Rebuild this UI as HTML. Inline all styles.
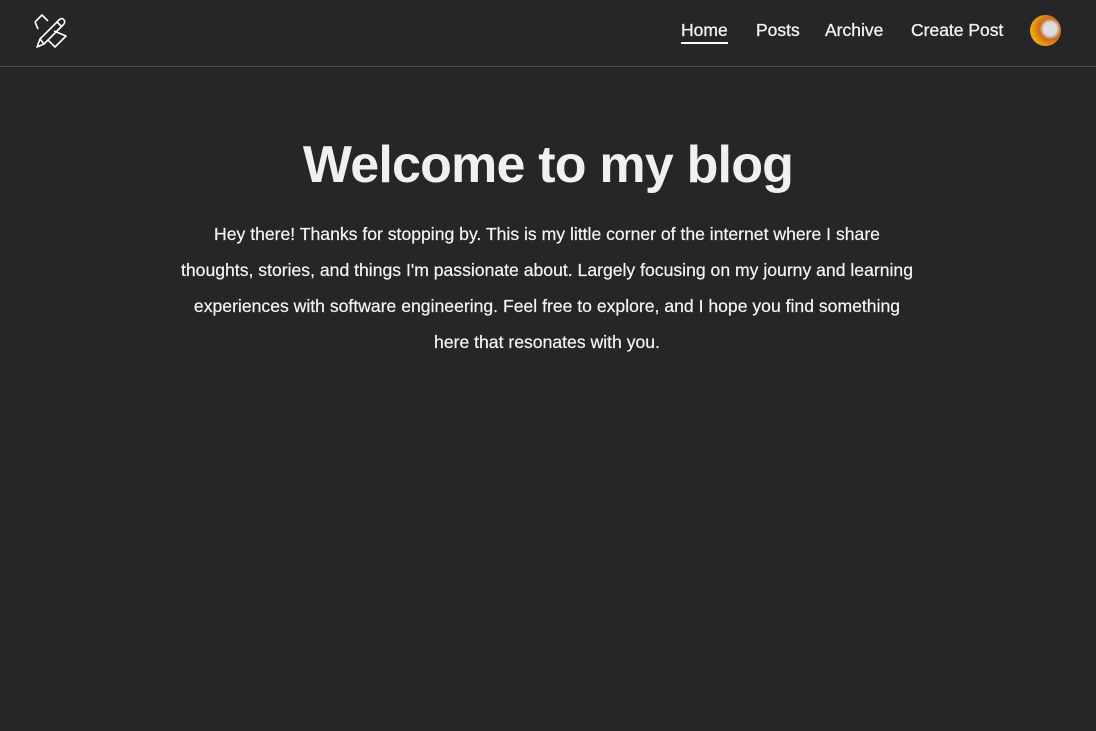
<!DOCTYPE html>
<html><head><style>
html,body{margin:0;padding:0;background:#262628;width:1096px;height:731px;overflow:hidden;font-family:"Liberation Sans",sans-serif;color:#f2f2f2}
header{height:66px;border-bottom:1px solid #4a4a4c;position:relative}
.logo{position:absolute;left:32px;top:12px}
nav{position:absolute;top:20px;left:0;width:1096px;height:24px;font-size:17.5px}
nav a{position:absolute;color:#f2f2f2;text-decoration:none;white-space:nowrap;top:0;-webkit-text-stroke:0.3px #f2f2f2}
.home{border-bottom:2px solid #fff;padding-bottom:1px}
.av{position:absolute;left:1030px;top:15px;width:31px;height:31px;border-radius:50%;background:radial-gradient(circle at 65% 45%,#ddd 0 25%,#c96a2a 40%,#f0a800 70%)}
h1{margin:0;position:absolute;top:135px;width:1096px;text-align:center;font-size:52px;font-weight:bold;letter-spacing:-0.8px;color:#f0f0f0}
p{position:absolute;top:216px;left:0;width:1094px;margin:0;text-align:center;font-size:17.6px;line-height:36px;color:#f4f4f4;white-space:nowrap;-webkit-text-stroke:0.2px #f4f4f4}
</style></head><body>
<header>
<svg class="logo" width="38" height="38" viewBox="0 0 38 38" fill="none" stroke="#fff" stroke-width="1.6" stroke-linejoin="round">
<path d="M3 10 L10 3 L16 9"/><path d="M3 10 L6 17"/><path d="M22 19 L34 24 L23 35 L16 28"/>
<path d="M5 35 L8 27 L27 8 Q30 5 32 8 Q34 10 31 13 L12 32 Z"/><path d="M8 27 L12 32"/><path d="M25 10 L29 14"/>
</svg>
<nav>
<a class="home" style="left:681px">Home</a>
<a style="left:756px">Posts</a>
<a style="left:825px">Archive</a>
<a style="left:911px">Create Post</a>
</nav>
<div class="av"></div>
</header>
<h1>Welcome to my blog</h1>
<p>Hey there! Thanks for stopping by. This is my little corner of the internet where I share<br>thoughts, stories, and things I'm passionate about. Largely focusing on my journy and learning<br>experiences with software engineering. Feel free to explore, and I hope you find something<br>here that resonates with you.</p>
</body></html>
